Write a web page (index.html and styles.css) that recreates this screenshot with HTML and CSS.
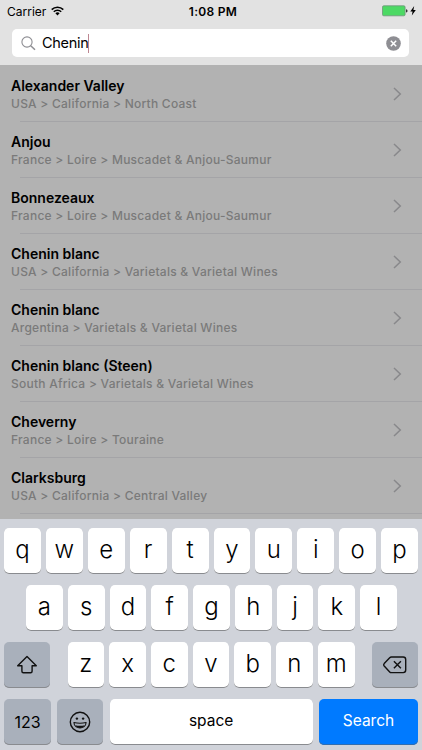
FILE: index.html
```
<!DOCTYPE html>
<html lang="en">
<head>
<meta charset="utf-8">
<title>Wine regions</title>
<link rel="stylesheet" href="styles.css">
</head>
<body>
<div class="phone">
  <header class="top">
    <div class="status">
      <div class="carrier"><span>Carrier</span>
        <svg width="13" height="10" viewBox="0 0 13 10"><g fill="none" stroke="#000" stroke-width="1.6"><path d="M.7 3.6a8.2 8.2 0 0 1 11.6 0"/><path d="M2.8 5.8a5.2 5.2 0 0 1 7.4 0"/></g><path d="M6.5 9.4 4.4 7.3a3 3 0 0 1 4.2 0z"/></svg>
      </div>
      <div class="time">1:08 PM</div>
      <div class="power">
        <svg width="35" height="12" viewBox="0 0 35 12"><rect x=".5" y=".8" width="22.6" height="10" rx="1.3" fill="#4cd964" stroke="#70947a" stroke-width=".8"/><path d="M24 4.2c2 .2 2 3.1 0 3.300z" fill="#333"/><path d="M32.2 1 28.3 6.400h2.300l-.8 4.200 4-5.600h-2.400z" fill="#000"/></svg>
      </div>
    </div>
    <div class="search">
      <svg width="15" height="15" viewBox="0 0 15 15" fill="none" stroke="#8e8e93" stroke-width="1.1"><circle cx="6" cy="6" r="5.1"/><path d="m9.700 9.700 4.300 4.100" stroke-width="1.5"/></svg>
      <span class="query">Chenin</span><i class="caret"></i>
      <svg class="clear" width="15" height="15" viewBox="0 0 15 15"><circle cx="7.5" cy="7.5" r="7.3" fill="#8e8e93"/><path d="m4.800 4.800 5.400 5.400m0-5.400-5.400 5.400" stroke="#fff" stroke-width="1.5"/></svg>
    </div>
  </header>
  <main class="list">
    <div class="row"><div><h2>Alexander Valley</h2><p>USA &gt; California &gt; North Coast</p></div><svg class="chev" viewBox="0 0 9 14"><path d="m1 1 6.300 6L1 13"/></svg></div>
    <div class="row"><div><h2>Anjou</h2><p>France &gt; Loire &gt; Muscadet &amp; Anjou-Saumur</p></div><svg class="chev" viewBox="0 0 9 14"><path d="m1 1 6.300 6L1 13"/></svg></div>
    <div class="row"><div><h2>Bonnezeaux</h2><p>France &gt; Loire &gt; Muscadet &amp; Anjou-Saumur</p></div><svg class="chev" viewBox="0 0 9 14"><path d="m1 1 6.300 6L1 13"/></svg></div>
    <div class="row"><div><h2>Chenin blanc</h2><p>USA &gt; California &gt; Varietals &amp; Varietal Wines</p></div><svg class="chev" viewBox="0 0 9 14"><path d="m1 1 6.300 6L1 13"/></svg></div>
    <div class="row"><div><h2>Chenin blanc</h2><p>Argentina &gt; Varietals &amp; Varietal Wines</p></div><svg class="chev" viewBox="0 0 9 14"><path d="m1 1 6.300 6L1 13"/></svg></div>
    <div class="row"><div><h2>Chenin blanc (Steen)</h2><p>South Africa &gt; Varietals &amp; Varietal Wines</p></div><svg class="chev" viewBox="0 0 9 14"><path d="m1 1 6.300 6L1 13"/></svg></div>
    <div class="row"><div><h2>Cheverny</h2><p>France &gt; Loire &gt; Touraine</p></div><svg class="chev" viewBox="0 0 9 14"><path d="m1 1 6.300 6L1 13"/></svg></div>
    <div class="row"><div><h2>Clarksburg</h2><p>USA &gt; California &gt; Central Valley</p></div><svg class="chev" viewBox="0 0 9 14"><path d="m1 1 6.300 6L1 13"/></svg></div>
  </main>
  <section class="keyboard">
    <div class="keys"><b>q</b><b>w</b><b>e</b><b>r</b><b>t</b><b>y</b><b>u</b><b>i</b><b>o</b><b>p</b></div>
    <div class="keys middle"><b>a</b><b>s</b><b>d</b><b>f</b><b>g</b><b>h</b><b>j</b><b>k</b><b>l</b></div>
    <div class="keys lower">
      <b class="gray"><svg width="22" height="20" viewBox="0 0 22 20"><path d="M11 1.500 1.700 10.800h4.200v5.400q0 1.500 1.500 1.500h7.200q1.500 0 1.500-1.500v-5.400h4.200z"/></svg></b>
      <div class="letters"><b>z</b><b>x</b><b>c</b><b>v</b><b>b</b><b>n</b><b>m</b></div>
      <b class="gray"><svg width="24" height="18" viewBox="0 0 24 18"><path d="M8.400 1h11.800q2.500 0 2.500 2.500v10.600q0 2.500-2.500 2.500H8.400q-1 0-1.700-.7L1.200 10q-1-1.200 0-2.400l5.500-5.900Q7.400 1 8.400 1zM10.900 5.300l7 7m0-7-7 7"/></svg></b>
    </div>
    <div class="keys bottom">
      <b class="gray num">123</b>
      <b class="gray"><svg width="22" height="22" viewBox="0 0 22 22"><circle cx="11" cy="11" r="9.7"/><g fill="#111" stroke="none"><circle cx="7.9" cy="7.600" r="1.2"/><circle cx="14.1" cy="7.600" r="1.2"/></g><path d="M4.900 11.500q6.100 1.600 12.200 0c-.4 7.300-11.800 7.300-12.200 0z" stroke-width="1.100"/><path d="M6.200 14.300q4.800 1.100 9.600 0c-1.600 3.600-8 3.600-9.600 0z" fill="#111" stroke="none"/></svg></b>
      <b class="space">space</b>
      <b class="go">Search</b>
    </div>
  </section>
</div>
</body>
</html>
```
FILE: styles.css
```
* { box-sizing: border-box; }
body { margin: 0; font-family: Inter, "Liberation Sans", sans-serif; color: #000; }
svg { display: block; flex: none; }
.phone { width: 422px; height: 750px; overflow: hidden; display: flex; flex-direction: column; }
.top { height: 65px; background: #e2e2e2; flex: none; }
.status { height: 22px; display: grid; grid-template-columns: 1fr auto 1fr; align-items: center; padding: 0 5px 0 7px; }
.carrier { display: flex; align-items: center; gap: 5px; font-size: 12px; }
.time { font-size: 12px; font-weight: 600; letter-spacing: .3px; padding-left: 2px; }
.power { justify-self: end; }
.search { height: 28px; margin: 7px 13px 0 12px; padding: 0 8px 0 9px; background: #fff; border-radius: 5px; display: flex; align-items: center; }
.query { margin: 0 0 2px 6px; font-size: 14.5px; letter-spacing: -.3px; }
.caret { width: 1px; height: 19px; background: #bd8792; }
.clear { margin-left: auto; }
.list { height: 454px; flex: none; padding-top: 1px; background: #b2b2b2; overflow: hidden; }
.row { height: 56px; padding: 11px 20px 0 11px; display: flex; justify-content: space-between; background: linear-gradient(#a4a4a7, #a4a4a7) 20px 100% / 100% 1px no-repeat; }
h2 { margin: 0; font-size: 14px; line-height: 17px; font-weight: 600; white-space: nowrap; }
p { margin: 2px 0 0; font-size: 12px; line-height: 16px; font-weight: 500; letter-spacing: .25px; color: #7a7a7a; white-space: nowrap; }
.chev { width: 9px; height: 14px; margin-top: 10px; fill: none; stroke: #88888b; stroke-width: 1.5; }
.keyboard { flex: 1; background: #d0d3da; padding: 9px 4px 0; display: flex; flex-direction: column; gap: 11px; }
.keys { height: 46px; display: grid; grid-template-columns: repeat(10, 1fr); column-gap: 5px; flex: none; }
.keys b { height: 46px; display: flex; align-items: center; justify-content: center; padding-bottom: 4px; background: #fff; border-radius: 5px; box-shadow: inset 0 -1px #898b8f; font-weight: 350; font-size: 24px; }
.keys.middle { grid-template-columns: repeat(9, 1fr); padding: 0 21px 0 22px; }
.keys.lower { grid-template-columns: 46px 287px 46px; column-gap: 0; justify-content: space-between; }
.letters { display: grid; grid-template-columns: repeat(7, 1fr); column-gap: 5px; }
.keys.bottom { grid-template-columns: 47px 46px 203px 99px; column-gap: 0; justify-content: space-between; }
.keys .gray { background: #a9b0bb; padding-bottom: 0; }
.gray svg { fill: none; stroke: #111; stroke-width: 1.4; stroke-linejoin: round; }
.keys .num { font-size: 16px; font-weight: 400; }
.keys .space { font-size: 15.5px; font-weight: 400; padding-bottom: 3px; }
.keys .go { background: #007aff; color: #fff; font-size: 15.5px; font-weight: 400; padding-bottom: 3px; box-shadow: inset 0 -1px #326eaf; }
```
